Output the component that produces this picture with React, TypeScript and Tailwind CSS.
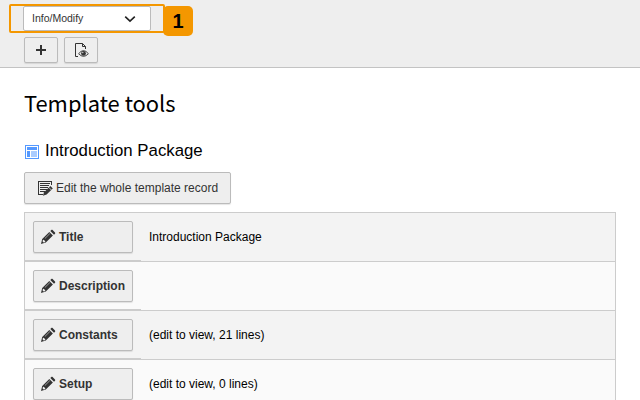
import React from "react";

const sans = "font-['Liberation_Sans',Arial,sans-serif]";
const button = "flex items-center rounded-[2px] border border-[#bbb] bg-[#eee] shadow-[0_1px_1px_rgba(0,0,0,0.1)]";

function Pencil() {
  return (
    <svg width="16" height="16" viewBox="0 0 16 16" fill="#333" className="shrink-0">
      <path d="M9.3 2.9l3.6 3.6-7.1 7.1L1 15l1.2-5zM10.3 2l1-1c.4-.4.9-.4 1.3 0L15 3.4c.4.4.4.9 0 1.3l-1 1z" />
      <path d="M4.6 9.2l5-5 .6.6-5 5z" fill="#999" />
      <path d="M2.9 10.9l.8-.2 1.6 1.6-.3.9-1.4.4-1-1z" fill="#eee" />
    </svg>
  );
}

function RecordIcon() {
  return (
    <svg width="16" height="16" viewBox="0 0 16 16" className="shrink-0">
      <path d="M1 1h14v4h-1V2H2v12h4v1H1z" fill="#333" />
      <path d="M3 3h10v1H3zM3 5h9v1H3zM3 7h8v1H3zM3 9h7v1H3zM3 11h5v1H3z" fill="#333" />
      <path d="M13.4 6l2.4 2.4-6.2 6.2-3.7 1.2 1.2-3.6z" fill="#333" />
      <path d="M11.8 7.4l2.6 2.6" stroke="#eee" strokeWidth=".8" />
    </svg>
  );
}

function ViewIcon() {
  return (
    <svg width="16" height="16" viewBox="0 0 16 16" fill="none">
      <path d="M5 14.5H2.5v-13h7l3 3V7M9.5 1.5v3h3" stroke="#333" />
      <path d="M5.6 11.7Q10.5 5.5 15.4 11.7Q10.5 17 5.6 11.7Z" fill="#eee" stroke="#333" strokeWidth=".9" />
      <circle cx="10.5" cy="11.4" r="2.4" fill="#333" />
      <circle cx="9.8" cy="10.6" r=".7" fill="#eee" />
    </svg>
  );
}

function TemplateIcon() {
  return (
    <svg width="16" height="16" viewBox="0 0 16 16" className="shrink-0">
      <path d="M1 1h14v14H1z" fill="#5599ff" />
      <path d="M2 2h12v12H2z" fill="#fff" />
      <path d="M3 3h10v3H3zM3 7h3v6H3z" fill="#5599ff" />
      <path d="M7 7h6v6H7z" fill="#aaccff" />
    </svg>
  );
}

const rows = [
  { label: "Title", value: "Introduction Package" },
  { label: "Description", value: "" },
  { label: "Constants", value: "(edit to view, 21 lines)" },
  { label: "Setup", value: "(edit to view, 0 lines)" },
];

export default function App() {
  return (
    <div className={`${sans} h-[400px] w-[640px] overflow-hidden bg-white text-xs text-black`}>
      <header className="h-[68px] border-b border-[#c3c3c3] bg-[#eee] pt-1.5 pl-[23px]">
        <div className="relative h-[25px] w-32">
          <div className="flex h-full items-center justify-between rounded-[2px] border border-[#bbb] bg-white pr-3.5 pl-2 text-[10.5px] text-[#333]">
            <span className="-mt-0.5">Info/Modify</span>
            <svg width="12" height="8" viewBox="0 0 12 8" fill="none" stroke="#222" strokeWidth="1.6">
              <path d="M1.2 1.6l4.8 4.6 4.8-4.6" />
            </svg>
          </div>
          <div className="absolute -top-0.5 -left-3.5 h-[29px] w-[156px] rounded-[2px] border-2 border-[#f49700]" />
          <div className="absolute top-0 left-[140px] flex h-[30px] w-[30px] items-center justify-center rounded-[5px] bg-[#f49700] text-[20px] leading-[30px] font-bold">1</div>
        </div>
        <div className="mt-1.5 ml-px flex gap-1.5">
          <button className={`${button} h-[26px] w-[34px] justify-center`}>
            <svg width="16" height="16" viewBox="0 0 16 16" fill="#333"><path d="M7 3h2v4h4v2H9v4H7V9H3V7h4z" /></svg>
          </button>
          <button className={`${button} h-[26px] w-[34px] justify-center`}><ViewIcon /></button>
        </div>
      </header>
      <main className="px-6">
        <h1 className="pt-[19px] font-['Noto_Sans_CJK_JP',sans-serif] text-[21.9px] leading-8">Template tools</h1>
        <h2 className="mt-[21px] flex h-5 items-center gap-[5px] text-[16.8px]">
          <span className="mt-[3px]"><TemplateIcon /></span>
          <span className="pt-0.5">Introduction Package</span>
        </h2>
        <button className={`${button} mt-3 h-8 w-[207px] gap-[3px] pl-3 text-[#333]`}>
          <RecordIcon />
          <span>Edit the whole template record</span>
        </button>
        <section className="mt-2 border-x border-t border-[#ccc]">
          {rows.map((row) => (
            <div key={row.label} className="flex h-[49px] border-b border-[#ccc] odd:bg-[#f3f3f3] even:bg-[#fafafa]">
              <div className="w-[116px] border-b border-[#ccc] pt-2 pl-2">
                <button className={`${button} h-8 w-[100px] gap-[3px] pl-1.5 font-bold text-[#333]`}>
                  <Pencil />
                  <span>{row.label}</span>
                </button>
              </div>
              <div className="flex items-center pl-2">{row.value}</div>
            </div>
          ))}
        </section>
      </main>
    </div>
  );
}
